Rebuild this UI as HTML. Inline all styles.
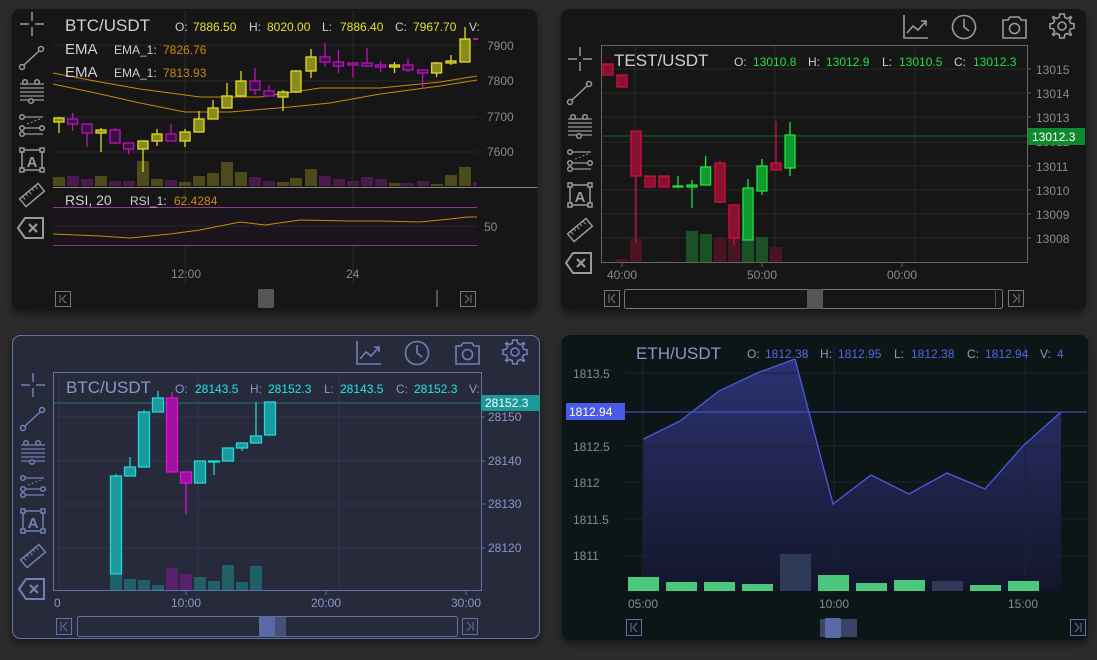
<!DOCTYPE html>
<html><head><meta charset="utf-8"><style>
html,body{margin:0;padding:0;background:#2b2b2b;width:1097px;height:660px;overflow:hidden}
svg{display:block;font-family:"Liberation Sans",sans-serif}
</style></head><body>
<svg width="1097" height="660" viewBox="0 0 1097 660" xmlns="http://www.w3.org/2000/svg">
<defs>
<filter id="sh" x="-5%" y="-5%" width="110%" height="115%"><feDropShadow dx="0" dy="4" stdDeviation="4" flood-color="#000" flood-opacity="0.5"/></filter>
<linearGradient id="ag" x1="0" y1="0" x2="0" y2="1"><stop offset="0" stop-color="#2c3272"/><stop offset="1" stop-color="#13162a"/></linearGradient>
<path id="gear" d="M-2.2,-12 L2.2,-12 L2.8,-8.6 L5.6,-7.4 L8.5,-9.4 L9.4,-8.5 L7.4,-5.6 L8.6,-2.8 L12,-2.2 L12,2.2 L8.6,2.8 L7.4,5.6 L9.4,8.5 L8.5,9.4 L5.6,7.4 L2.8,8.6 L2.2,12 L-2.2,12 L-2.8,8.6 L-5.6,7.4 L-8.5,9.4 L-9.4,8.5 L-7.4,5.6 L-8.6,2.8 L-12,2.2 L-12,-2.2 L-8.6,-2.8 L-7.4,-5.6 L-9.4,-8.5 L-8.5,-9.4 L-5.6,-7.4 L-2.8,-8.6 Z M4,0 A4,4 0 1 0 -4,0 A4,4 0 1 0 4,0 Z"/>
</defs>
<rect width="1097" height="660" fill="#2b2b2b"/>
<rect x="12" y="9" width="525" height="301" rx="8" fill="#151515" filter="url(#sh)"/>
<rect x="561" y="9" width="525" height="301" rx="8" fill="#151515" filter="url(#sh)"/>
<rect x="12.5" y="335.5" width="527" height="303" rx="8" fill="#282a3a" stroke="#6272a8" filter="url(#sh)"/>
<rect x="562" y="335" width="526" height="305" rx="8" fill="#101214" filter="url(#sh)"/>

<!-- ===== PANEL 1 ===== -->
<g stroke="#2a2a2a" stroke-width="1">
<line x1="53" y1="45" x2="477" y2="45"/><line x1="53" y1="81" x2="477" y2="81"/><line x1="53" y1="117" x2="477" y2="117"/><line x1="53" y1="152" x2="477" y2="152"/>
<line x1="185" y1="10" x2="185" y2="285"/><line x1="353" y1="10" x2="353" y2="285"/>
</g>
<g>
<rect x="53" y="177" width="12" height="9" fill="#4d4a1c"/><rect x="67" y="176" width="12" height="10" fill="#4a1a4c"/><rect x="81" y="179" width="12" height="7" fill="#4a1a4c"/><rect x="95" y="176" width="12" height="10" fill="#4d4a1c"/><rect x="109" y="181" width="12" height="5" fill="#4a1a4c"/><rect x="123" y="181" width="12" height="5" fill="#4a1a4c"/><rect x="137" y="161" width="12" height="25" fill="#4d4a1c"/><rect x="151" y="179" width="12" height="7" fill="#4d4a1c"/><rect x="165" y="180" width="12" height="6" fill="#4a1a4c"/><rect x="179" y="182" width="12" height="4" fill="#4d4a1c"/><rect x="193" y="176" width="12" height="10" fill="#4d4a1c"/><rect x="207" y="173" width="12" height="13" fill="#4d4a1c"/><rect x="221" y="162" width="12" height="24" fill="#4d4a1c"/><rect x="235" y="172" width="12" height="14" fill="#4d4a1c"/><rect x="249" y="177" width="12" height="9" fill="#4a1a4c"/><rect x="263" y="181" width="12" height="5" fill="#4a1a4c"/><rect x="277" y="182" width="12" height="4" fill="#4d4a1c"/><rect x="290" y="178" width="12" height="8" fill="#4d4a1c"/><rect x="305" y="169" width="12" height="17" fill="#4d4a1c"/><rect x="319" y="176" width="12" height="10" fill="#4a1a4c"/><rect x="333" y="179" width="12" height="7" fill="#4a1a4c"/><rect x="347" y="181" width="12" height="5" fill="#4a1a4c"/><rect x="361" y="177" width="12" height="9" fill="#4a1a4c"/><rect x="375" y="179" width="12" height="7" fill="#4a1a4c"/><rect x="389" y="183" width="12" height="3" fill="#4d4a1c"/><rect x="402" y="183" width="12" height="3" fill="#4a1a4c"/><rect x="417" y="181" width="12" height="5" fill="#4a1a4c"/><rect x="431" y="184" width="12" height="2" fill="#4d4a1c"/><rect x="445" y="175" width="12" height="11" fill="#4d4a1c"/><rect x="459" y="167" width="12" height="19" fill="#4d4a1c"/><rect x="473" y="182" width="4" height="4" fill="#4a1a4c"/>
</g>
<polyline fill="none" stroke="#c88a00" stroke-width="1" points="53,73 100,82 140,89 200,97 260,97 320,88 380,88 440,82 477,76"/>
<polyline fill="none" stroke="#c88a00" stroke-width="1" points="53,84 100,94 140,103 185,112 230,112 290,107 330,103 380,94 440,86 477,80"/>
<g stroke-width="1.3">
<g stroke="#e0dc20" fill="#8a8a1e">
<line x1="59" y1="117" x2="59" y2="133"/><rect x="54" y="118" width="10" height="4"/>
<line x1="101" y1="128" x2="101" y2="152"/><rect x="96" y="130" width="10" height="3"/>
<line x1="143" y1="141" x2="143" y2="172"/><rect x="138" y="141" width="10" height="8"/>
<line x1="157" y1="129" x2="157" y2="146"/><rect x="152" y="134" width="10" height="7"/>
<line x1="185" y1="129" x2="185" y2="147"/><rect x="180" y="132" width="10" height="9"/>
<line x1="199" y1="111" x2="199" y2="132"/><rect x="194" y="119" width="10" height="13"/>
<line x1="213" y1="100" x2="213" y2="119"/><rect x="208" y="108" width="10" height="11"/>
<line x1="227" y1="83" x2="227" y2="108"/><rect x="222" y="96" width="10" height="12"/>
<line x1="241" y1="71" x2="241" y2="96"/><rect x="236" y="81" width="10" height="15"/>
<line x1="283" y1="90" x2="283" y2="111"/><rect x="278" y="92" width="10" height="5"/>
<line x1="296" y1="70" x2="296" y2="93"/><rect x="291" y="71" width="10" height="21"/>
<line x1="311" y1="49" x2="311" y2="78"/><rect x="306" y="57" width="10" height="14"/>
<line x1="394.5" y1="62" x2="394.5" y2="73"/><rect x="389.5" y="65" width="10" height="2"/>
<line x1="436.6" y1="62" x2="436.6" y2="77"/><rect x="431.6" y="63" width="10" height="10"/>
<line x1="451" y1="55" x2="451" y2="65"/><rect x="446" y="61" width="10" height="2"/>
<line x1="465" y1="27" x2="465" y2="62"/><rect x="460" y="39" width="10" height="23"/>
</g>
<g stroke="#c010c0" fill="#3a1040">
<line x1="72.6" y1="113" x2="72.6" y2="131"/><rect x="67.6" y="119" width="10" height="5"/>
<line x1="87" y1="124" x2="87" y2="147"/><rect x="82" y="124" width="10" height="9"/>
<line x1="115" y1="128" x2="115" y2="144"/><rect x="110" y="130" width="10" height="13"/>
<line x1="128.6" y1="143" x2="128.6" y2="154"/><rect x="123.6" y="143" width="10" height="6"/>
<line x1="171" y1="124" x2="171" y2="141"/><rect x="166" y="134" width="10" height="7"/>
<line x1="255" y1="68" x2="255" y2="95"/><rect x="250" y="81" width="10" height="9"/>
<line x1="269" y1="85" x2="269" y2="96"/><rect x="264" y="91" width="10" height="5"/>
<line x1="325" y1="43" x2="325" y2="67"/><rect x="320" y="57" width="10" height="5"/>
<line x1="338.5" y1="50" x2="338.5" y2="73"/><rect x="333.5" y="62" width="10" height="4"/>
<line x1="353" y1="62" x2="353" y2="77"/><rect x="348" y="63" width="10" height="2"/>
<line x1="367" y1="48" x2="367" y2="67"/><rect x="362" y="63" width="10" height="3"/>
<line x1="380.6" y1="61" x2="380.6" y2="72"/><rect x="375.6" y="65" width="10" height="2"/>
<line x1="408" y1="59" x2="408" y2="72"/><rect x="403" y="65" width="10" height="5"/>
<line x1="422.6" y1="70" x2="422.6" y2="89"/><rect x="417.6" y="70" width="10" height="3"/>
</g>
<rect x="473" y="38" width="5" height="2" fill="#c010c0"/>
</g>
<text x="65" y="31" font-size="17" fill="#d0d0d0">BTC/USDT</text>
<g font-size="12" fill="#cfcfcf">
<text x="175" y="31">O:</text><text x="249" y="31">H:</text><text x="322" y="31">L:</text><text x="395" y="31">C:</text><text x="469" y="31">V:</text>
</g>
<g font-size="12" fill="#e8e020"><text x="193" y="31">7886.50</text><text x="267" y="31">8020.00</text><text x="340" y="31">7886.40</text><text x="413" y="31">7967.70</text></g>
<text x="65" y="54" font-size="15" fill="#d0d0d0">EMA</text><text x="114" y="54" font-size="12" fill="#cfcfcf">EMA_1:</text><text x="163" y="54" font-size="12" fill="#d08800">7826.76</text>
<text x="65" y="77" font-size="15" fill="#d0d0d0">EMA</text><text x="114" y="77" font-size="12" fill="#cfcfcf">EMA_1:</text><text x="163" y="77" font-size="12" fill="#d08800">7813.93</text>
<g font-size="12" fill="#8a8a8a"><text x="487" y="50">7900</text><text x="487" y="85">7800</text><text x="487" y="121">7700</text><text x="487" y="156">7600</text><text x="484" y="231">50</text>
<text x="171" y="278">12:00</text><text x="346" y="278">24</text></g>
<line x1="53" y1="187.5" x2="537" y2="187.5" stroke="#888" stroke-width="1"/>
<rect x="53" y="207" width="424" height="38" fill="#1a141b"/>
<line x1="53" y1="207.5" x2="477" y2="207.5" stroke="#8a3a8a"/><line x1="53" y1="245.5" x2="477" y2="245.5" stroke="#8a3a8a"/>
<line x1="53" y1="226" x2="477" y2="226" stroke="#2a2a2a"/>
<polyline fill="none" stroke="#c88a00" stroke-width="1" points="53,234 100,236 130,238 170,234 200,230 240,222 265,225 300,220 350,221 380,221 420,222 450,219 467,217 477,217"/>
<text x="65" y="205" font-size="14" fill="#d0d0d0">RSI, 20</text><text x="130" y="205" font-size="12" fill="#cfcfcf">RSI_1:</text><text x="174" y="205" font-size="12" fill="#d08800">62.4284</text>
<g fill="none" stroke="#777" stroke-width="1"><rect x="55.5" y="291.5" width="15" height="15"/><path d="M60 295V303M66 295L62 299L66 303"/><rect x="460.5" y="291.5" width="15" height="15"/><path d="M471 295V303M465 295L469 299L465 303"/></g>
<rect x="258" y="289" width="16" height="19" rx="2" fill="#555"/><rect x="436" y="290" width="2" height="17" fill="#555"/>

<g id="tb1" stroke="#9a9a9a" fill="none" stroke-width="1.5">
<path d="M20 24H29M35 24H44M32 12V21M32 27V36"/>
<circle cx="22" cy="67" r="2.5"/><circle cx="41" cy="49" r="2.5"/><path d="M24 65L39 51"/>
<path d="M20 84H44M20 88H44M20 92H44M20 96H44M20 100H44" stroke-width="1.3"/>
<circle cx="25" cy="82" r="2.3" fill="#151515"/><circle cx="37" cy="82" r="2.3" fill="#151515"/><circle cx="31" cy="101" r="2.3" fill="#151515"/>
<circle cx="22" cy="117" r="2.3"/><path d="M25 117H43M25 128H40M25 134H43" stroke-width="1.2"/><path d="M27 124L40 119" stroke-dasharray="2 2" stroke-width="1"/><circle cx="22" cy="128" r="2.3"/><circle cx="42" cy="128" r="2.3"/><circle cx="22" cy="134" r="2.3"/>
<rect x="22" y="150" width="20" height="20"/><rect x="20" y="148" width="4" height="4" fill="#151515"/><rect x="40" y="148" width="4" height="4" fill="#151515"/><rect x="20" y="168" width="4" height="4" fill="#151515"/><rect x="40" y="168" width="4" height="4" fill="#151515"/>
<g transform="rotate(-40 32 195)"><rect x="20" y="190" width="24" height="10"/><path d="M24 190V194M28 190V193M32 190V194M36 190V193M40 190V194" stroke-width="1"/></g>
<path d="M18 228L25 218H43V238H25Z" stroke-width="2"/><path d="M29 224L37 232M37 224L29 232" stroke-width="2.2"/>
</g>
<text x="32" y="167" font-size="15" font-weight="bold" fill="#9a9a9a" text-anchor="middle">A</text>

<!-- ===== PANEL 2 ===== -->
<g stroke="#2a2a2a"><line x1="601" y1="69" x2="1027" y2="69"/><line x1="601" y1="93" x2="1027" y2="93"/><line x1="601" y1="117" x2="1027" y2="117"/><line x1="601" y1="142" x2="1027" y2="142"/><line x1="601" y1="166" x2="1027" y2="166"/><line x1="601" y1="190" x2="1027" y2="190"/><line x1="601" y1="214" x2="1027" y2="214"/><line x1="601" y1="238" x2="1027" y2="238"/>
<line x1="635" y1="45" x2="635" y2="262"/><line x1="775" y1="45" x2="775" y2="262"/><line x1="915" y1="45" x2="915" y2="262"/></g>
<g stroke="#666"><path d="M1027 69h4M1027 93h4M1027 117h4M1027 166h4M1027 190h4M1027 214h4M1027 238h4M622 262v5M762 262v5M902 262v5"/></g>
<rect x="601.5" y="45.5" width="426" height="217" fill="none" stroke="#666"/>
<line x1="601" y1="136" x2="1028" y2="136" stroke="#0e6a22"/>
<g><rect x="630" y="239" width="12" height="23" fill="#4a1422"/><rect x="616" y="259" width="12" height="3" fill="#4a1422"/><rect x="658" y="261" width="12" height="1" fill="#4a1422"/><rect x="686" y="231" width="12" height="31" fill="#1a5228"/><rect x="700" y="234" width="12" height="28" fill="#1a5228"/><rect x="714" y="238" width="12" height="24" fill="#4a1422"/><rect x="728" y="238" width="12" height="24" fill="#4a1422"/><rect x="742" y="238" width="12" height="24" fill="#1a5228"/><rect x="756" y="237" width="12" height="25" fill="#1a5228"/><rect x="770" y="247" width="12" height="15" fill="#4a1422"/></g>
<g stroke-width="1.3">
<g stroke="#d0103a" fill="#8a1030">
<rect x="603" y="64" width="10" height="11"/><rect x="617" y="75" width="10" height="12"/>
<line x1="636" y1="131" x2="636" y2="243"/><rect x="631" y="131" width="10" height="45"/>
<rect x="645" y="176" width="10" height="11"/><rect x="659" y="176" width="10" height="11"/>
<line x1="720" y1="161" x2="720" y2="203"/><rect x="715" y="163" width="10" height="39"/>
<line x1="734" y1="204" x2="734" y2="245"/><rect x="729" y="205" width="10" height="33"/>
<line x1="776" y1="121" x2="776" y2="170"/><rect x="771" y="163" width="10" height="7"/>
</g>
<g stroke="#20e040" fill="#109a30">
<line x1="678" y1="176" x2="678" y2="188"/><rect x="673" y="186" width="10" height="1"/>
<line x1="692" y1="180" x2="692" y2="208"/><rect x="687" y="185" width="10" height="2"/>
<line x1="705.6" y1="156" x2="705.6" y2="185"/><rect x="700.6" y="167" width="10" height="18"/>
<line x1="748" y1="179" x2="748" y2="240"/><rect x="743" y="188" width="10" height="52"/>
<line x1="762" y1="159" x2="762" y2="195"/><rect x="757" y="166" width="10" height="25"/>
<line x1="790" y1="122" x2="790" y2="176"/><rect x="785" y="135" width="10" height="33"/>
</g></g>
<text x="614" y="66" font-size="17" fill="#d0d0d0">TEST/USDT</text>
<g font-size="12" fill="#cfcfcf"><text x="734" y="66">O:</text><text x="808" y="66">H:</text><text x="882" y="66">L:</text><text x="954" y="66">C:</text></g>
<g font-size="12" fill="#20e040"><text x="753" y="66">13010.8</text><text x="826" y="66">13012.9</text><text x="899" y="66">13010.5</text><text x="973" y="66">13012.3</text></g>
<g font-size="12" fill="#8a8a8a"><text x="1036" y="74">13015</text><text x="1036" y="98">13014</text><text x="1036" y="122">13013</text><text x="1036" y="146">13012</text><text x="1036" y="171">13011</text><text x="1036" y="195">13010</text><text x="1036" y="219">13009</text><text x="1036" y="243">13008</text>
<text x="607" y="279">40:00</text><text x="747" y="279">50:00</text><text x="887" y="279">00:00</text></g>
<rect x="1028" y="128" width="57" height="17" fill="#0e8a2e"/><text x="1032" y="141" font-size="12" fill="#fff">13012.3</text>
<g fill="none" stroke="#777"><rect x="604.5" y="290.5" width="15" height="16"/><path d="M609 294V303M615 294L611 298.5L615 303"/><rect x="1008.5" y="290.5" width="15" height="16"/><path d="M1019 294V303M1013 294L1017 298.5L1013 303"/><rect x="624.5" y="289.5" width="378" height="19" rx="2"/></g>
<rect x="807" y="289" width="16" height="20" rx="2" fill="#555"/><rect x="995" y="291" width="1" height="16" fill="#555"/>
<g stroke="#9a9a9a" fill="none" stroke-width="1.6">
<path d="M904 15V38H928"/><path d="M907 33L913 26L918 30L926 21M921 21H926V26"/>
<circle cx="964" cy="27" r="11.5"/><path d="M964 19V27L969 31"/>
<path d="M1003 20H1008L1010 17H1019L1021 20H1026V38H1003Z"/><circle cx="1014.5" cy="28.5" r="5"/>
<use href="#gear" transform="translate(1062 26)"/>
</g>
<use href="#tb1" transform="translate(548 35)"/>
<text x="580" y="202" font-size="15" font-weight="bold" fill="#9a9a9a" text-anchor="middle">A</text>

<!-- ===== PANEL 3 ===== -->
<g stroke="#333548"><line x1="53" y1="417" x2="481" y2="417"/><line x1="53" y1="461" x2="481" y2="461"/><line x1="53" y1="504" x2="481" y2="504"/><line x1="53" y1="548" x2="481" y2="548"/>
<line x1="59" y1="372" x2="59" y2="590"/><line x1="198" y1="372" x2="198" y2="590"/><line x1="339" y1="372" x2="339" y2="590"/></g>
<rect x="53.5" y="372.5" width="428" height="218" fill="none" stroke="#6272a8"/>
<g stroke="#6272a8"><path d="M481 417h4M481 461h4M481 504h4M481 548h4M186 590v5M326 590v5M466 590v5"/></g>
<line x1="53" y1="403" x2="482" y2="403" stroke="#1a7a80"/>
<g><rect x="110" y="575" width="12" height="15" fill="#206068"/><rect x="124" y="579" width="12" height="11" fill="#206068"/><rect x="138" y="580" width="12" height="10" fill="#206068"/><rect x="152" y="585" width="12" height="5" fill="#206068"/><rect x="166" y="568" width="12" height="22" fill="#5a2070"/><rect x="180" y="574" width="12" height="16" fill="#5a2070"/><rect x="194" y="577" width="12" height="13" fill="#206068"/><rect x="208" y="581" width="12" height="9" fill="#206068"/><rect x="222" y="565" width="12" height="25" fill="#206068"/><rect x="236" y="582" width="12" height="8" fill="#206068"/><rect x="250" y="566" width="12" height="24" fill="#206068"/></g>
<g stroke-width="1.3">
<g stroke="#20d8d8" fill="#1a9a9a">
<line x1="116" y1="474" x2="116" y2="476"/><rect x="110.5" y="476" width="11" height="98"/>
<line x1="130" y1="457" x2="130" y2="467"/><rect x="124.5" y="467" width="11" height="9"/>
<line x1="144" y1="410" x2="144" y2="412"/><rect x="138.5" y="412" width="11" height="55"/>
<line x1="158" y1="391" x2="158" y2="398"/><rect x="152.5" y="398" width="11" height="14"/>
<rect x="194.5" y="461" width="11" height="22"/>
<line x1="214" y1="462" x2="214" y2="475"/><rect x="208.5" y="461" width="11" height="1"/>
<rect x="222.5" y="448" width="11" height="13"/>
<line x1="242" y1="448" x2="242" y2="451"/><rect x="236.5" y="443" width="11" height="5"/>
<line x1="256" y1="402" x2="256" y2="436"/><rect x="250.5" y="436" width="11" height="7"/>
<rect x="264.5" y="402" width="11" height="33"/>
</g>
<g stroke="#e010e0" fill="#a010a0">
<line x1="172" y1="392" x2="172" y2="398"/><rect x="166.5" y="398" width="11" height="74"/>
<line x1="186" y1="483" x2="186" y2="514"/><rect x="180.5" y="472" width="11" height="11"/>
</g></g>
<text x="66" y="393" font-size="17" fill="#8a98c8">BTC/USDT</text>
<g font-size="12" fill="#8a98c8"><text x="175" y="393">O:</text><text x="250" y="393">H:</text><text x="324" y="393">L:</text><text x="396" y="393">C:</text><text x="469" y="393">V:</text></g>
<g font-size="12" fill="#20e8e8"><text x="195" y="393">28143.5</text><text x="268" y="393">28152.3</text><text x="340" y="393">28143.5</text><text x="414" y="393">28152.3</text></g>
<rect x="481" y="395" width="59" height="16" fill="#1a9a9a"/><text x="485" y="407" font-size="12" fill="#fff">28152.3</text>
<g font-size="12" fill="#8a98c8"><text x="488" y="421">28150</text><text x="488" y="465">28140</text><text x="488" y="508">28130</text><text x="488" y="552">28120</text>
<text x="54" y="607">0</text><text x="171" y="607">10:00</text><text x="311" y="607">20:00</text><text x="451" y="607">30:00</text></g>
<g fill="none" stroke="#6272a8"><rect x="56.5" y="618.5" width="15" height="16"/><path d="M61 622V631M67 622L63 626.5L67 631"/><rect x="462.5" y="618.5" width="15" height="16"/><path d="M473 622V631M467 622L471 626.5L467 631"/><rect x="77.5" y="616.5" width="380" height="20" rx="2"/></g>
<rect x="275" y="617" width="11" height="19" fill="#44507a"/><rect x="259" y="616" width="16" height="21" rx="2" fill="#5a6aa8"/>
<g stroke="#7080b8" fill="none" stroke-width="1.6">
<path d="M357 341V364H381"/><path d="M360 359L366 352L371 356L379 347M374 347H379V352"/>
<circle cx="417" cy="353" r="11.5"/><path d="M417 345V353L422 357"/>
<path d="M456 346H461L463 343H472L474 346H479V364H456Z"/><circle cx="467.5" cy="354.5" r="5"/>
<use href="#gear" transform="translate(515 352)"/>
</g>
<g transform="translate(1 361)">
<g stroke="#7080b8" fill="none" stroke-width="1.5">
<path d="M20 24H29M35 24H44M32 12V21M32 27V36"/>
<circle cx="22" cy="67" r="2.5"/><circle cx="41" cy="49" r="2.5"/><path d="M24 65L39 51"/>
<path d="M20 84H44M20 88H44M20 92H44M20 96H44M20 100H44" stroke-width="1.3"/>
<circle cx="25" cy="82" r="2.3" fill="#282a3a"/><circle cx="37" cy="82" r="2.3" fill="#282a3a"/><circle cx="31" cy="101" r="2.3" fill="#282a3a"/>
<circle cx="22" cy="117" r="2.3"/><path d="M25 117H43M25 128H40M25 134H43" stroke-width="1.2"/><path d="M27 124L40 119" stroke-dasharray="2 2" stroke-width="1"/><circle cx="22" cy="128" r="2.3"/><circle cx="42" cy="128" r="2.3"/><circle cx="22" cy="134" r="2.3"/>
<rect x="22" y="150" width="20" height="20"/><rect x="20" y="148" width="4" height="4" fill="#282a3a"/><rect x="40" y="148" width="4" height="4" fill="#282a3a"/><rect x="20" y="168" width="4" height="4" fill="#282a3a"/><rect x="40" y="168" width="4" height="4" fill="#282a3a"/>
<g transform="rotate(-40 32 195)"><rect x="20" y="190" width="24" height="10"/><path d="M24 190V194M28 190V193M32 190V194M36 190V193M40 190V194" stroke-width="1"/></g>
<path d="M18 228L25 218H43V238H25Z" stroke-width="2"/><path d="M29 224L37 232M37 224L29 232" stroke-width="2.2"/>
</g>
<text x="32" y="167" font-size="15" font-weight="bold" fill="#7080b8" text-anchor="middle">A</text>
</g>

<!-- ===== PANEL 4 ===== -->
<polygon fill="url(#ag)" points="643.5,439 680,421 719,391 757,373 795,359 833,504 871,475 909,494 947,473 985,489 1023,446 1061,412 1061,591 643.5,591"/>
<g stroke="#1e2130" stroke-width="1"><line x1="625" y1="373" x2="1087" y2="373"/><line x1="625" y1="446" x2="1087" y2="446"/><line x1="625" y1="482" x2="1087" y2="482"/><line x1="625" y1="519" x2="1087" y2="519"/><line x1="625" y1="556" x2="1087" y2="556"/>
<line x1="643" y1="345" x2="643" y2="591"/><line x1="834" y1="345" x2="834" y2="591"/><line x1="1025" y1="345" x2="1025" y2="591"/></g>
<line x1="566" y1="412" x2="1087" y2="412" stroke="#4a5ae0"/>
<polyline fill="none" stroke="#4a5ae0" stroke-width="1.3" points="643.5,439 680,421 719,391 757,373 795,359 833,504 871,475 909,494 947,473 985,489 1023,446 1061,412"/>
<g fill="#4cc87e"><rect x="628" y="577" width="31" height="14"/><rect x="666" y="582" width="31" height="9"/><rect x="704" y="582" width="31" height="9"/><rect x="742" y="584" width="31" height="7"/><rect x="818" y="575" width="31" height="16"/><rect x="856" y="583" width="31" height="8"/><rect x="894" y="580" width="31" height="11"/><rect x="970" y="585" width="31" height="6"/><rect x="1008" y="581" width="31" height="10"/></g>
<g fill="#2e3a58"><rect x="780" y="554" width="31" height="37"/><rect x="932" y="581" width="31" height="10"/></g>
<rect x="566" y="403" width="59" height="17" fill="#4a5ae8"/><text x="569" y="416" font-size="12" fill="#fff">1812.94</text>
<text x="636" y="359" font-size="17" fill="#8a98c8">ETH/USDT</text>
<g font-size="12" fill="#8a98c8"><text x="747" y="358">O:</text><text x="820" y="358">H:</text><text x="894" y="358">L:</text><text x="967" y="358">C:</text><text x="1040" y="358">V:</text></g>
<g font-size="12" fill="#5068e8"><text x="765" y="358">1812.38</text><text x="838" y="358">1812.95</text><text x="911" y="358">1812.38</text><text x="985" y="358">1812.94</text><text x="1057" y="358">4</text></g>
<g font-size="12" fill="#8a8a8a"><text x="573" y="378">1813.5</text><text x="573" y="451">1812.5</text><text x="573" y="487">1812</text><text x="573" y="524">1811.5</text><text x="573" y="560">1811</text>
<text x="628" y="608">05:00</text><text x="819" y="608">10:00</text><text x="1008" y="608">15:00</text></g>
<g fill="none" stroke="#6272a8"><rect x="626.5" y="619.5" width="15" height="16"/><path d="M631 623V632M637 623L633 627.5L637 632"/><rect x="1070.5" y="619.5" width="15" height="16"/><path d="M1081 623V632M1075 623L1079 627.5L1075 632"/></g>
<rect x="820" y="619" width="37" height="18" fill="#3a4565"/><rect x="825" y="618" width="16" height="20" rx="2" fill="#5a6aa8"/>
</svg>
</body></html>
